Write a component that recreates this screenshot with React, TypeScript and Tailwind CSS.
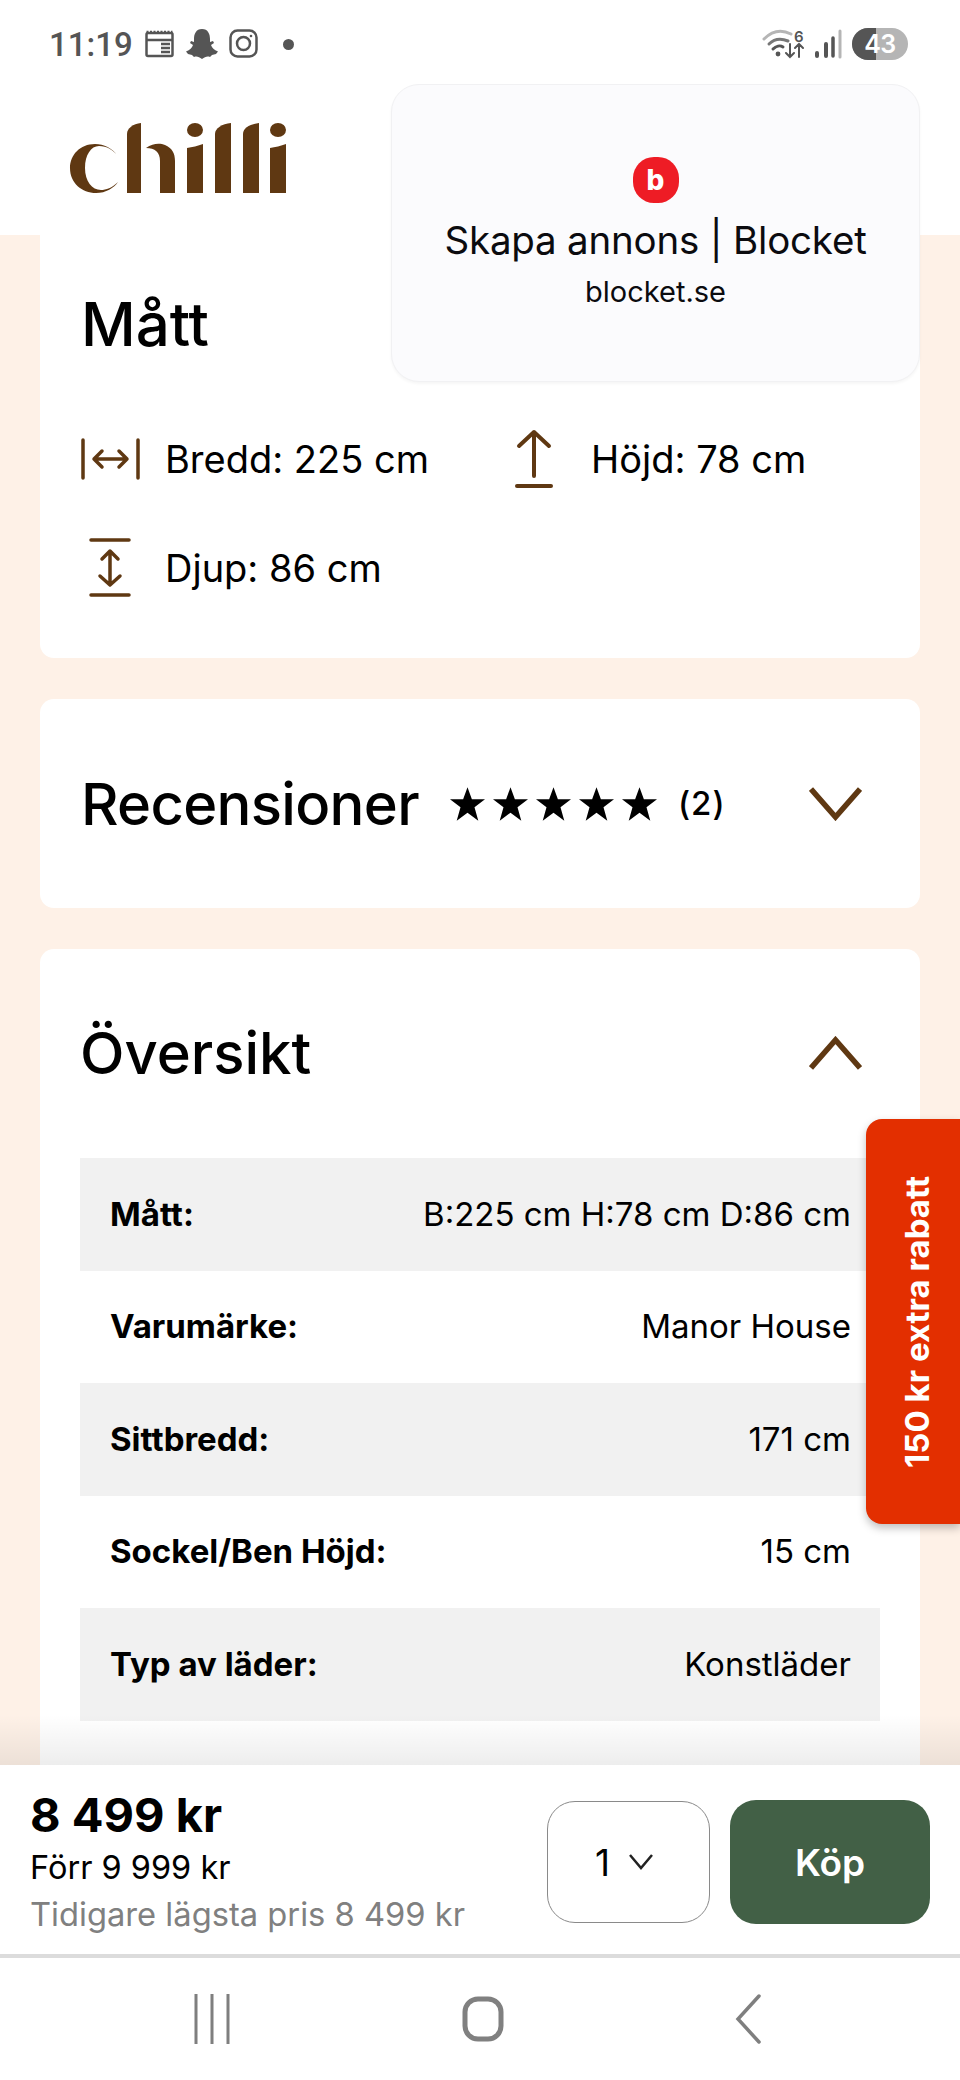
const brown = "#5f3812";

function Logo() {
  return (
    <svg width="224" height="76" viewBox="67 120 224 76" fill={brown}>
      <path d="M118 156C112 148 104 144 95 144C80 144 70 155 70 168C70 183 82 193 96 193C106 193 114 188 118 182C112 188 106 190 101 190C92 190 85 181 85 168C85 155 91 146 99 146C107 146 113 150 118 156Z" />
      <path d="M127 193V134C127 128 133 124 141 123V193Z" />
      <path d="M146 148C153 143 160 143 165 145C172 148 175 153 175 161V193H160V161C160 152 155 148 146 148Z" />
      <path d="M187 193V148C192 147 198 146 203 144V193Z" />
      <ellipse cx="195" cy="130" rx="8" ry="7" />
      <path d="M215 193V134C215 128 222 124 231 123V193Z" />
      <path d="M243 193V134C243 128 250 124 259 123V193Z" />
      <path d="M270 193V148C275 147 281 146 286 144V193Z" />
      <ellipse cx="278" cy="130" rx="8" ry="7" />
    </svg>
  );
}

function StatusLeft() {
  return (
    <div className="flex items-center text-[#555555]">
      <span className="w-[80px] font-['Roboto',sans-serif] text-[33px] leading-none font-medium">11:19</span>
      <svg className="ml-[16px]" width="30" height="28" viewBox="0 0 30 28" fill="none" stroke="#555555" strokeWidth="2.5">
        <rect x="1.5" y="3" width="26" height="23" rx="1.5" />
        <path d="M1.5 2h26" strokeDasharray="2 1.5" />
        <path d="M1.5 10H27.5M16 14H25M16 18H25M16 22H25" />
      </svg>
      <svg className="ml-[11px]" width="32" height="30" viewBox="0 0 32 30" fill="#555555">
        <path d="M16 0C22 0 24 5 24 10V13L27 12L28 14L25 16C26 19 28 21 32 22.5L30 25L26 26L24 28C21 27 19 28 16 30C13 28 11 27 8 28L6 26L2 25L0 22.5C4 21 6 19 7 16L4 14L5 12L8 13V10C8 5 10 0 16 0Z" />
      </svg>
      <svg className="ml-[11px]" width="30" height="30" viewBox="0 0 30 30" fill="none" stroke="#555555" strokeWidth="2.5">
        <rect x="1.5" y="1.5" width="26" height="26" rx="7" />
        <circle cx="14.5" cy="14.5" r="6.5" />
        <circle cx="22" cy="7" r="1.3" fill="#555555" stroke="none" />
      </svg>
      <span className="ml-[24px] h-[11px] w-[11px] rounded-full bg-[#555555]" />
    </div>
  );
}

function StatusRight() {
  return (
    <div className="flex items-center">
      <div className="relative">
        <svg width="42" height="30" viewBox="0 0 42 30" fill="none" strokeLinecap="round" className="block">
          <path d="M2 10C11 1 21 1 29 5" stroke="#b5b5b5" strokeWidth="3" />
          <path d="M7 15C13 9 19 9 26 12" stroke="#777777" strokeWidth="3" />
          <path d="M11 20C14 17 18 16 21 18" stroke="#555555" strokeWidth="3" />
          <circle cx="16" cy="25" r="2.4" fill="#555555" />
          <path d="M28 15V28M24 24L28 28L32 24M37 28V15M33 19L37 15L41 19" stroke="#555555" strokeWidth="2" />
        </svg>
        <span className="absolute left-[32px] top-[0px] text-[15px] leading-none font-semibold text-[#555555]">6</span>
      </div>
      <svg className="ml-[10px]" width="28" height="30" viewBox="0 0 28 30" strokeLinecap="round">
        <path d="M3 24V27M12 15V27" stroke="#555555" strokeWidth="4" fill="none" />
        <path d="M19 9V27" stroke="#555555" strokeWidth="3.5" fill="none" />
        <path d="M26 2V28" stroke="#b5b5b5" strokeWidth="3" fill="none" />
      </svg>
      <div className="ml-[10px] relative flex h-[32px] w-[56px] items-center justify-center overflow-hidden rounded-full bg-[#b5b5b5]">
        <div className="absolute inset-y-0 left-0 w-[24px] bg-[#555555]" />
        <span className="relative text-[25px] leading-none font-semibold text-white tracking-[-0.5px]">43</span>
      </div>
    </div>
  );
}

function Popup() {
  return (
    <div className="absolute left-[391px] top-[84px] flex h-[298px] w-[529px] flex-col items-center rounded-[28px] border border-[#f1f1f3] bg-[#fbfbfd] pt-[72px] shadow-[0_2px_3px_rgba(0,0,0,0.04)]">
      <div className="flex h-[46px] w-[46px] items-center justify-center rounded-[21px] bg-[#ee1c25] text-[28px] leading-none font-extrabold text-white">b</div>
      <div className="mt-[13px] text-[38.5px] leading-[48px] text-[#0b0b0f] font-normal tracking-[-0.2px]">Skapa annons | Blocket</div>
      <div className="mt-[10px] text-[29px] leading-[36px] text-[#0b0b0f]">blocket.se</div>
    </div>
  );
}

function Measure({ icon, text, className }: { icon: React.ReactNode; text: string; className?: string }) {
  return (
    <div className={"flex items-center " + (className ?? "")}>
      <div className="flex w-[84px] shrink-0 justify-start">{icon}</div>
      <span className="text-[38px] leading-[44px] text-black">{text}</span>
    </div>
  );
}

const icoProps = { fill: "none", stroke: brown, strokeLinecap: "round" as const, strokeLinejoin: "round" as const };

function WidthIcon() {
  return (
    <svg width="62" height="42" viewBox="0 0 62 42" {...icoProps} strokeWidth="3.5">
      <path d="M2 2V40M57 2V40" />
      <path d="M13 21H46M21 13L13 21L21 29M38 13L46 21L38 29" />
    </svg>
  );
}
function HeightIcon() {
  return (
    <svg width="40" height="60" viewBox="0 0 40 60" {...icoProps} strokeWidth="4">
      <path d="M20 3V47M5 17L20 3L35 17" />
      <path d="M3 57H37" />
    </svg>
  );
}
function DepthIcon() {
  return (
    <svg width="62" height="60" viewBox="0 0 62 60" {...icoProps} strokeWidth="3.5">
      <path d="M10 2H48M10 57H48" />
      <path d="M29 13V46M21 21L29 13L37 21M19 38L29 47L39 38" />
    </svg>
  );
}

function Chevron({ up }: { up?: boolean }) {
  return (
    <svg width="53" height="34" viewBox="0 0 53 34" fill="none" stroke={brown} strokeWidth="5.5">
      <path d={up ? "M2 32L26.5 4L51 32" : "M2 2L26.5 30L51 2"} />
    </svg>
  );
}

function Star() {
  return (
    <svg width="35" height="34" viewBox="0 0 24 23" fill="#000000">
      <path d="M12 0L15 8.3H24L16.8 13.8L19.4 23L12 17.5L4.6 23L7.2 13.8L0 8.3H9Z" />
    </svg>
  );
}

const rows: [string, string][] = [
  ["Mått:", "B:225 cm H:78 cm D:86 cm"],
  ["Varumärke:", "Manor House"],
  ["Sittbredd:", "171 cm"],
  ["Sockel/Ben Höjd:", "15 cm"],
  ["Typ av läder:", "Konstläder"],
  ["Design:", ""],
];

export default function App() {
  return (
    <div className="relative flex h-[2080px] w-[960px] flex-col overflow-hidden bg-white font-['Inter','Liberation_Sans',sans-serif]">
      <header className="h-[235px] shrink-0 bg-white">
        <div className="flex h-[84px] items-center justify-between pl-[49px] pr-[52px] pt-[4px]">
          <StatusLeft />
          <StatusRight />
        </div>
        <div className="pl-[67px] pt-[36px]">
          <Logo />
        </div>
      </header>

      <main className="relative min-h-0 flex-1 overflow-hidden bg-[#fef1e7] px-[40px]">
        <section className="rounded-b-[14px] bg-white px-[41px] pt-[54px] h-[423px]">
          <h2 className="text-[60px] leading-[70px] font-medium text-black">Mått</h2>
          <div className="mt-[64px] flex h-[72px] items-center">
            <div className="w-[433px]"><Measure icon={<WidthIcon />} text="Bredd: 225 cm" /></div>
            <Measure icon={<HeightIcon />} text="Höjd: 78 cm" className="[&>div]:w-[77px]" />
          </div>
          <div className="mt-[37px] flex h-[72px] items-center">
            <Measure icon={<DepthIcon />} text="Djup: 86 cm" />
          </div>
        </section>

        <section className="mt-[41px] flex h-[209px] items-center rounded-[14px] bg-white pl-[41px] pr-[58px]">
          <h2 className="text-[58px] leading-[70px] font-medium tracking-[-0.7px] text-black">Recensioner</h2>
          <div className="ml-[31px] flex items-center gap-[8px]">
            <Star /><Star /><Star /><Star /><Star />
          </div>
          <span className="ml-[21px] text-[33px] font-medium tracking-[1px] text-black">(2)</span>
          <div className="ml-auto"><Chevron /></div>
        </section>

        <section className="mt-[41px] rounded-[14px] bg-white px-[40px] pt-[67px]">
          <div className="flex h-[74px] items-center justify-between pr-[18px]">
            <h2 className="text-[58px] leading-[70px] font-medium text-black">Översikt</h2>
            <Chevron up />
          </div>
          <div className="mt-[68px]">
            {rows.map(([k, v], i) => (
              <div key={k} className={"flex h-[112.5px] items-center justify-between pl-[30px] pr-[29px] text-[33px] text-black " + (i % 2 === 0 ? "bg-[#f1f1f1]" : "bg-white") + (i === 5 ? " pt-[8px]" : "")}>
                <span className="font-bold">{k}</span>
                <span>{v}</span>
              </div>
            ))}
          </div>
        </section>

        <div className="absolute inset-x-0 bottom-0 h-[50px] bg-gradient-to-b from-transparent to-[#00000012]" />

        <div className="absolute right-0 top-[884px] flex h-[405px] w-[94px] items-center justify-center rounded-l-[16px] bg-[#e32f00] pl-[8px] shadow-[0_4px_8px_rgba(0,0,0,0.25)]">
          <span className="rotate-180 text-[33px] leading-none font-bold text-white [writing-mode:vertical-rl]">150 kr extra rabatt</span>
        </div>
      </main>

      <div className="flex h-[193px] shrink-0 items-start justify-between bg-white pl-[30px] pr-[30px] border-b-[4px] border-[#dcdcdc]">
        <div className="pt-[24px]">
          <div className="text-[47px] leading-[52px] font-bold text-black">8 499 kr</div>
          <div className="mt-[8px] text-[32.5px] leading-[38px] text-black">Förr 9 999 kr</div>
          <div className="mt-[8px] text-[32.7px] leading-[38px] text-[#808080]">Tidigare lägsta pris 8 499 kr</div>
        </div>
        <div className="flex items-center gap-[20px] pt-[35px]">
          <div className="flex h-[122px] w-[163px] items-center justify-center gap-[18px] rounded-[28px] border-[1.5px] border-[#8a8a8a] bg-white pr-[8px]">
            <span className="text-[37px] leading-none text-black">1</span>
            <svg width="26" height="18" viewBox="0 0 26 18" fill="none" stroke="#222222" strokeWidth="2.5">
              <path d="M2 2L13 15L24 2" />
            </svg>
          </div>
          <div className="flex h-[124px] w-[200px] items-center justify-center rounded-[26px] bg-[#426046] text-[37px] leading-none font-semibold text-white">Köp</div>
        </div>
      </div>

      <nav className="flex h-[122px] shrink-0 items-center justify-between bg-white pl-[194px] pr-[199px]">
        <svg width="36" height="50" viewBox="0 0 36 50" fill="none" stroke="#7f7f7f" strokeWidth="3">
          <path d="M2 0V50M18 0V50M34 0V50" />
        </svg>
        <svg width="42" height="46" viewBox="0 0 42 46" fill="none" stroke="#808080" strokeWidth="5">
          <rect x="3" y="3" width="36" height="40" rx="13" />
        </svg>
        <svg width="26" height="50" viewBox="0 0 26 50" fill="none" stroke="#7f7f7f" strokeWidth="3.5" strokeLinecap="round">
          <path d="M24 2L3 25L24 48" />
        </svg>
      </nav>

      <Popup />
    </div>
  );
}
